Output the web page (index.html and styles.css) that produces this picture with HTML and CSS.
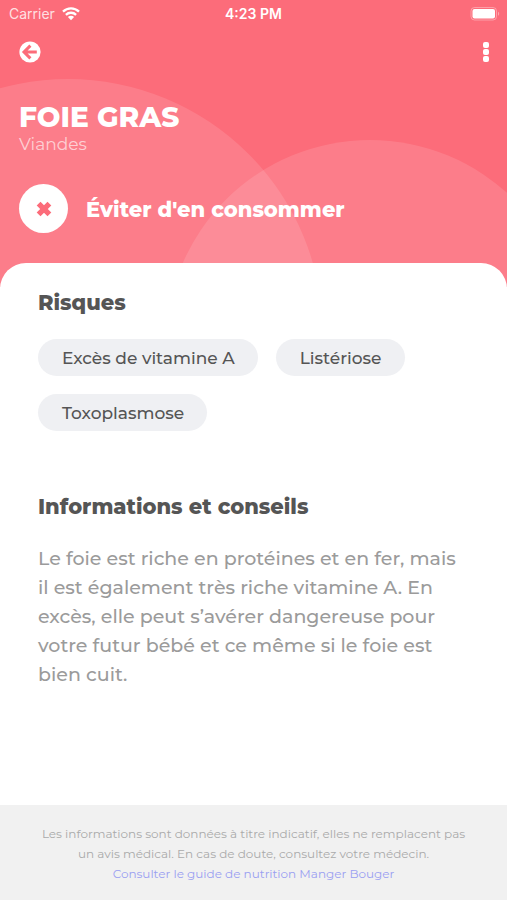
FILE: index.html
```html
<!DOCTYPE html>
<html lang="fr">
<head>
  <meta charset="UTF-8">
  <meta name="viewport" content="width=device-width, initial-scale=1.0">
  <title>Foie gras</title>
  <link rel="stylesheet" href="styles.css">
</head>
<body>
  <header class="hero">
    <div class="status-bar">
      <div class="carrier">
        <span>Carrier</span>
        <svg width="18" height="14" viewBox="0 0 18 14" aria-hidden="true">
          <path d="M1 4.6a11.5 11.5 0 0 1 16 0M3.9 7.8a7.4 7.4 0 0 1 10.2 0" fill="none" stroke="#fff" stroke-width="2.3"/>
          <path d="M9 13.2L5.9 10a4.4 4.4 0 0 1 6.2 0z" fill="#fff"/>
        </svg>
      </div>
      <span class="time">4:23 PM</span>
      <svg class="battery" width="30" height="14" viewBox="0 0 30 14" aria-hidden="true">
        <rect x="1" y="0.5" width="25.5" height="12.5" rx="3.5" fill="none" stroke="#fff" stroke-opacity=".35"/>
        <rect x="2.5" y="2" width="22.5" height="9.5" rx="2" fill="#fff"/>
        <path d="M28 4.7a2.3 2.3 0 0 1 0 4z" fill="#fff" fill-opacity=".4"/>
      </svg>
    </div>

    <nav class="toolbar">
      <button type="button" aria-label="Retour">
        <svg width="22" height="22" viewBox="0 0 22 22">
          <circle cx="11" cy="11" r="10.6" fill="#fff"/>
          <path d="M11.4 4.6L5 11l6.4 6.4M5.4 11h12.4" fill="none" stroke="#fc6c7a" stroke-width="3"/>
        </svg>
      </button>
      <button type="button" aria-label="Menu">
        <svg width="6" height="20" viewBox="0 0 6 20" fill="#fff">
          <rect width="6" height="6" rx="2"/>
          <rect y="7" width="6" height="6" rx="2"/>
          <rect y="14" width="6" height="6" rx="2"/>
        </svg>
      </button>
    </nav>

    <h1>FOIE GRAS</h1>
    <p class="category">Viandes</p>

    <div class="advice">
      <span class="advice-icon">
        <svg width="18" height="18" viewBox="0 0 18 18" aria-hidden="true">
          <path d="M3.6 3.6l10.8 10.8M14.4 3.6L3.6 14.4" stroke="#fc6c7a" stroke-width="5.4"/>
        </svg>
      </span>
      <strong>Éviter d'en consommer</strong>
    </div>
  </header>

  <main class="card">
    <h2>Risques</h2>
    <ul class="tags">
      <li>Excès de vitamine A</li>
      <li>Listériose</li>
      <li>Toxoplasmose</li>
    </ul>

    <h2>Informations et conseils</h2>
    <p class="description">Le foie est riche en protéines et en fer, mais il est également très riche vitamine A. En excès, elle peut s’avérer dangereuse pour votre futur bébé et ce même si le foie est bien cuit.</p>
  </main>

  <footer class="notice">
    <p>Les informations sont données à titre indicatif, elles ne remplacent pas un avis médical. En cas de doute, consultez votre médecin.</p>
    <a href="#">Consulter le guide de nutrition Manger Bouger</a>
  </footer>
</body>
</html>
```
FILE: styles.css
```css
* {
  box-sizing: border-box;
}

body {
  display: flex;
  flex-direction: column;
  min-height: 100vh;
  margin: 0;
  font-family: Montserrat, Inter, sans-serif;
  color: #555;
  background: #fff;
}

h1, h2, p, ul {
  margin: 0;
  padding: 0;
}

.hero {
  position: relative;
  z-index: 0;
  overflow: hidden;
  padding: 0 19px 54px;
  color: #fff;
  background: #fc6c7a;
}

/* Decorative circles behind the title */
.hero::before,
.hero::after {
  content: "";
  position: absolute;
  z-index: -1;
  border-radius: 50%;
  background: rgba(255, 255, 255, 0.12);
}

.hero::before {
  top: 79px;
  left: -187px;
  width: 510px;
  height: 510px;
}

.hero::after {
  top: 140px;
  right: -67px;
  width: 408px;
  height: 408px;
}

.status-bar {
  display: grid;
  grid-template-columns: 1fr auto 1fr;
  align-items: center;
  height: 27px;
  margin: 0 -10px;
  font-family: Inter, sans-serif;
  font-size: 14px;
}

.carrier {
  display: flex;
  align-items: center;
  gap: 7px;
  color: rgba(255, 255, 255, 0.8);
}

.time {
  font-weight: 600;
}

.battery {
  justify-self: end;
  margin-right: -2px;
}

.toolbar {
  display: flex;
  justify-content: space-between;
  align-items: center;
  height: 50px;
}

.toolbar button {
  display: flex;
  padding: 0;
  border: 0;
  background: none;
  cursor: pointer;
}

.toolbar button:last-child {
  margin-right: -1px;
}

h1 {
  margin-top: 23px;
  font-size: 28px;
  line-height: 34px;
  font-weight: 800;
}

.category {
  font-size: 17px;
  line-height: 20px;
  color: rgba(255, 255, 255, 0.65);
}

.advice {
  display: flex;
  align-items: center;
  gap: 18px;
  margin-top: 30px;
  font-size: 21px;
}

.advice strong {
  padding-top: 2px;
  font-weight: 800;
}

.advice-icon {
  display: flex;
  justify-content: center;
  align-items: center;
  width: 49px;
  height: 49px;
  border-radius: 50%;
  background: #fff;
}

.card {
  position: relative;
  z-index: 1;
  flex: 1;
  margin-top: -24px;
  padding: 25px 44px 24px 38px;
  border-radius: 26px 26px 0 0;
  background: #fff;
}

h2 {
  font-size: 21px;
  line-height: 30px;
  font-weight: 800;
}

.tags {
  display: flex;
  flex-wrap: wrap;
  gap: 18px;
  margin: 21px 0 61px;
  list-style: none;
}

.tags li {
  padding: 1px 23px 0 24px;
  border-radius: 19px;
  font-size: 17px;
  line-height: 36px;
  font-weight: 500;
  background: #eff0f3;
}

.description {
  margin-top: 22px;
  font-size: 19px;
  line-height: 29px;
  font-weight: 500;
  color: #9b9b9b;
}

.notice {
  padding: 19px 36px 16px;
  font-size: 12px;
  line-height: 20px;
  text-align: center;
  color: #aaa;
  background: #f1f1f1;
}

.notice a {
  color: #9a9ff2;
  text-decoration: none;
}
```
